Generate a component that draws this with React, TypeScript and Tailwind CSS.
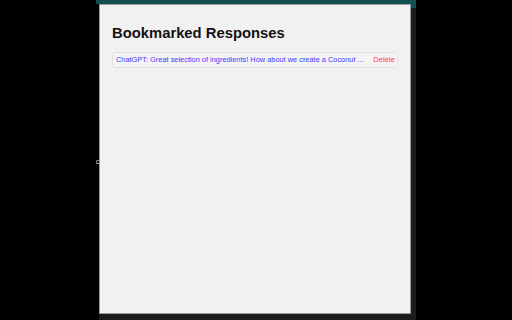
import React from "react";

const bookmarks = [
  {
    id: 1,
    text: "ChatGPT: Great selection of ingredients! How about we create a Coconut ...",
  },
];

export default function App() {
  return (
    <div className="w-[512px] h-[320px] bg-black flex overflow-hidden" style={{ fontFamily: '"Liberation Sans", Arial, sans-serif' }}>
      <div className="w-[96px] shrink-0" />
      <div className="w-[320px] shrink-0 flex flex-col bg-[#1c1c1c]">
        {/* top strip */}
        <div className="h-[4px] bg-[#124f50] shrink-0" />
        <div className="flex-1 flex min-h-0">
          <div className="w-[3px] bg-black flex items-center justify-center overflow-hidden">
            <span className="text-[8px] leading-none text-[#cccccc]">c</span>
          </div>
          <div className="w-[312px] h-[310px] bg-[#f1f1f1] border border-[#9a9a9a] px-3 pt-[20px] flex flex-col">
            <h1 className="text-[14.8px] leading-[17px] font-bold text-[#111]">Bookmarked Responses</h1>
            <div className="mt-[10px] flex flex-col gap-1">
              {bookmarks.map((b) => (
                <div
                  key={b.id}
                  className="h-[16px] flex items-center border border-[#e2e2e2] rounded-[3px] bg-[#f4f4f4] pl-[3px] pr-[2px]"
                >
                  <span className="flex-1 min-w-0 whitespace-nowrap overflow-hidden text-[7.4px] text-[#3a3aff]">{b.text}</span>
                  <span className="ml-[7px] shrink-0 text-[7.5px] text-[#ff4444] cursor-pointer">Delete</span>
                </div>
              ))}
            </div>
          </div>
          <div className="flex-1 flex flex-col">
            <div className="h-[4px] bg-[#124f50]" />
          </div>
        </div>
      </div>
    </div>
  );
}
